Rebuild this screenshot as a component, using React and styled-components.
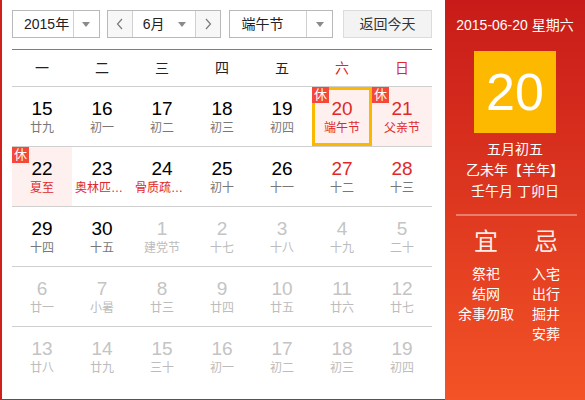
import React from "react";
import styled, { createGlobalStyle } from "styled-components";

// Perpetual calendar, June 2015

const GlobalStyle = createGlobalStyle`
  body {
    margin: 0;
    font-family: "Liberation Sans", "Noto Sans CJK SC", sans-serif;
    background: #fff;
  }
`;

const Wrapper = styled.div`
  display: flex;
  width: 585px;
  height: 400px;
  overflow: hidden;
`;

const Main = styled.div`
  width: 445px;
  flex: none;
  box-sizing: border-box;
  border-left: 2px solid #d0201c;
  border-bottom: 1px solid #d0201c;
  padding: 10px 13px 0 10px;
  background: #fff;
`;

const Toolbar = styled.div`
  display: flex;
  align-items: center;
  height: 28px;
`;

const Select = styled.div`
  display: flex;
  box-sizing: border-box;
  width: ${(p) => p.$width}px;
  height: 28px;
  margin-left: ${(p) => p.$gap || 0}px;
  border: 1px solid #b9b9b9;
  background: #fff;
`;

const SelectText = styled.div`
  flex: 1;
  padding-left: ${(p) => p.$pad || 11}px;
  font-size: 14px;
  line-height: 26px;
  color: #222;
  white-space: nowrap;
`;

const SelectArrow = styled.div`
  width: ${(p) => (p.$plain ? 26 : 25)}px;
  display: flex;
  align-items: center;
  justify-content: center;
  border-left: ${(p) => (p.$plain ? "none" : "1px solid #d0d0d0")};
  &::after {
    content: "";
    border-left: 4px solid transparent;
    border-right: 4px solid transparent;
    border-top: 5px solid #8a8a8a;
  }
`;

const NavBtn = styled.div`
  width: 24px;
  display: flex;
  align-items: center;
  justify-content: center;
  background: #f7f7f7;
  border-left: ${(p) => (p.$side === "right" ? "1px solid #d0d0d0" : "none")};
  border-right: ${(p) => (p.$side === "left" ? "1px solid #d0d0d0" : "none")};
`;

const TodayBtn = styled.div`
  box-sizing: border-box;
  width: 89px;
  height: 28px;
  margin-left: 10px;
  border: 1px solid #dcdcdc;
  background: #f3f3f3;
  font-size: 14px;
  line-height: 26px;
  text-align: center;
  color: #333;
`;

const Calendar = styled.div`
  margin-top: 11px;
  border-top: 1px solid #e5544a;
`;

const WeekHeader = styled.div`
  display: grid;
  grid-template-columns: repeat(7, 60px);
  height: 36px;
  border-bottom: 1px solid #cfcfcf;
`;

const WeekDay = styled.div`
  font-size: 14px;
  line-height: 36px;
  text-align: center;
  color: ${(p) => (p.$weekend ? "#e0282a" : "#222")};
`;

const Week = styled.div`
  display: grid;
  grid-template-columns: repeat(7, 60px);
  height: 59px;
  border-bottom: 1px solid #cfcfcf;
  &:last-child {
    border-bottom: none;
  }
`;

const Cell = styled.div`
  position: relative;
  display: flex;
  flex-direction: column;
  align-items: center;
  padding-top: 11px;
  box-sizing: border-box;
  background: ${(p) => (p.$rest ? "#fff0f0" : "transparent")};
  box-shadow: ${(p) => (p.$selected ? "inset 0 0 0 3px #fbb800" : "none")};
`;

const Num = styled.div`
  font-size: 19px;
  line-height: 22px;
  color: ${(p) => (p.$other ? "#c4c4c4" : p.$red ? "#e0282a" : "#000")};
`;

const Lunar = styled.div`
  max-width: 54px;
  font-size: 12px;
  line-height: 16px;
  white-space: nowrap;
  overflow: hidden;
  text-overflow: ellipsis;
  color: ${(p) => (p.$other ? "#bcbcbc" : p.$red ? "#e0282a" : "#777")};
`;

const RestBadge = styled.span`
  position: absolute;
  top: 0;
  left: 0;
  width: 17px;
  height: 16px;
  background: #f5473a;
  color: #fff;
  font-size: 13px;
  line-height: 16px;
  text-align: center;
`;

const Panel = styled.div`
  width: 140px;
  flex: none;
  padding-top: 17px;
  background: linear-gradient(#c81b19, #f35326);
  color: #fff;
  text-align: center;
`;

const PanelDate = styled.div`
  font-size: 14px;
  line-height: 16px;
  white-space: nowrap;
`;

const DayBox = styled.div`
  width: 82px;
  height: 82px;
  margin: 18px auto 0;
  background: #fdb800;
  font-size: 52px;
  line-height: 82px;
`;

const LunarInfo = styled.div`
  margin-top: 6px;
  font-size: 14px;
  line-height: 21px;
  white-space: nowrap;
`;

const Divider = styled.div`
  height: 2px;
  margin: 12px 8px 0 11px;
  background: rgba(255, 255, 255, 0.35);
`;

const YiJi = styled.div`
  display: grid;
  grid-template-columns: 60px 60px;
  padding-left: 11px;
  margin-top: 11px;
`;

const Column = styled.div`
  display: flex;
  flex-direction: column;
  align-items: center;
`;

const BigChar = styled.div`
  font-size: 24px;
  line-height: 30px;
  color: rgba(255, 255, 255, 0.92);
  margin-bottom: 7px;
`;

const Item = styled.div`
  font-size: 14px;
  line-height: 20px;
  white-space: nowrap;
`;

const Chevron = ({ dir }) => (
  <svg width="8" height="12" viewBox="0 0 8 12">
    <polyline
      points={dir === "left" ? "6,1 1.5,6 6,11" : "2,1 6.5,6 2,11"}
      fill="none"
      stroke="#7a7a7a"
      strokeWidth="1.2"
    />
  </svg>
);

const weekdays = ["一", "二", "三", "四", "五", "六", "日"];

const weeks = [
  [
    { d: 15, l: "廿九" },
    { d: 16, l: "初一" },
    { d: 17, l: "初二" },
    { d: 18, l: "初三" },
    { d: 19, l: "初四" },
    { d: 20, l: "端午节", red: true, lred: true, rest: true, selected: true },
    { d: 21, l: "父亲节", red: true, lred: true, rest: true },
  ],
  [
    { d: 22, l: "夏至", lred: true, rest: true },
    { d: 23, l: "奥林匹克日", lred: true },
    { d: 24, l: "骨质疏松日", lred: true },
    { d: 25, l: "初十" },
    { d: 26, l: "十一" },
    { d: 27, l: "十二", red: true },
    { d: 28, l: "十三", red: true },
  ],
  [
    { d: 29, l: "十四" },
    { d: 30, l: "十五" },
    { d: 1, l: "建党节", other: true },
    { d: 2, l: "十七", other: true },
    { d: 3, l: "十八", other: true },
    { d: 4, l: "十九", other: true },
    { d: 5, l: "二十", other: true },
  ],
  [
    { d: 6, l: "廿一", other: true },
    { d: 7, l: "小暑", other: true },
    { d: 8, l: "廿三", other: true },
    { d: 9, l: "廿四", other: true },
    { d: 10, l: "廿五", other: true },
    { d: 11, l: "廿六", other: true },
    { d: 12, l: "廿七", other: true },
  ],
  [
    { d: 13, l: "廿八", other: true },
    { d: 14, l: "廿九", other: true },
    { d: 15, l: "三十", other: true },
    { d: 16, l: "初一", other: true },
    { d: 17, l: "初二", other: true },
    { d: 18, l: "初三", other: true },
    { d: 19, l: "初四", other: true },
  ],
];

export default function App() {
  return (
    <Wrapper>
      <GlobalStyle />
      <Main>
        <Toolbar>
          <Select $width={88}>
            <SelectText>2015年</SelectText>
            <SelectArrow />
          </Select>
          <Select $width={115} $gap={7}>
            <NavBtn $side="left">
              <Chevron dir="left" />
            </NavBtn>
            <SelectText $pad={10}>6月</SelectText>
            <SelectArrow $plain />
            <NavBtn $side="right">
              <Chevron dir="right" />
            </NavBtn>
          </Select>
          <Select $width={104} $gap={8}>
            <SelectText>端午节</SelectText>
            <SelectArrow />
          </Select>
          <TodayBtn>返回今天</TodayBtn>
        </Toolbar>

        <Calendar>
          <WeekHeader>
            {weekdays.map((w, i) => (
              <WeekDay key={w} $weekend={i > 4}>
                {w}
              </WeekDay>
            ))}
          </WeekHeader>
          {weeks.map((week, wi) => (
            <Week key={wi}>
              {week.map((c, ci) => (
                <Cell key={ci} $rest={c.rest} $selected={c.selected}>
                  {c.rest && <RestBadge>休</RestBadge>}
                  <Num $red={c.red} $other={c.other}>
                    {c.d}
                  </Num>
                  <Lunar $red={c.lred} $other={c.other}>
                    {c.l}
                  </Lunar>
                </Cell>
              ))}
            </Week>
          ))}
        </Calendar>
      </Main>

      <Panel>
        <PanelDate>2015-06-20 星期六</PanelDate>
        <DayBox>20</DayBox>
        <LunarInfo>
          <div>五月初五</div>
          <div>乙未年【羊年】</div>
          <div>壬午月 丁卯日</div>
        </LunarInfo>
        <Divider />
        <YiJi>
          <Column>
            <BigChar>宜</BigChar>
            <Item>祭祀</Item>
            <Item>结网</Item>
            <Item>余事勿取</Item>
          </Column>
          <Column>
            <BigChar>忌</BigChar>
            <Item>入宅</Item>
            <Item>出行</Item>
            <Item>掘井</Item>
            <Item>安葬</Item>
          </Column>
        </YiJi>
      </Panel>
    </Wrapper>
  );
}
